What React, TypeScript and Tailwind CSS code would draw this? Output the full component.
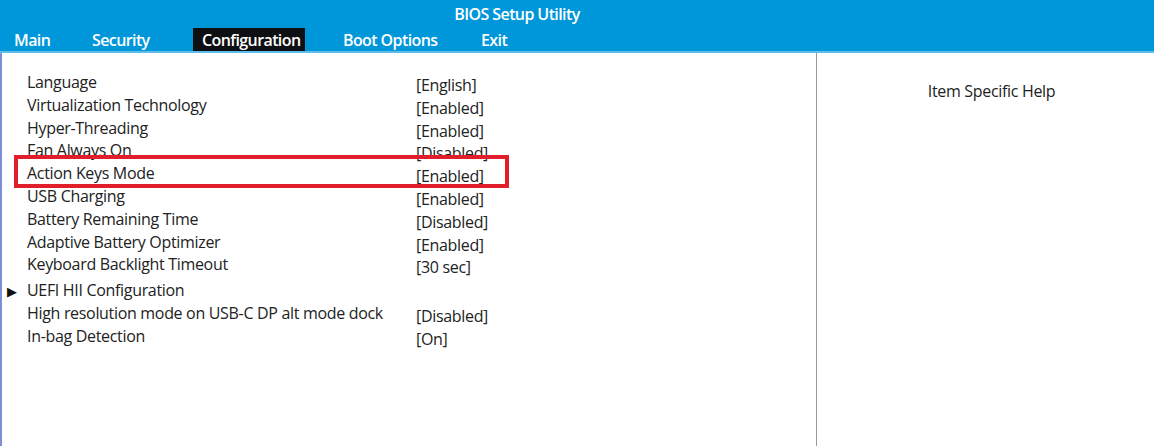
const tabs = [
  { name: "Main", cls: "w-[78px]" },
  { name: "Security", cls: "w-[101px]" },
  { name: "Configuration", cls: "w-[112px] bg-[#0e0f12] pl-[9px]" },
  { name: "Boot Options", cls: "ml-[38px] w-[138px]" },
  { name: "Exit", cls: "" },
];

type Item = { label: string; value?: string; submenu?: boolean; selected?: boolean };

const items: Item[] = [
  { label: "Language", value: "[English]" },
  { label: "Virtualization Technology", value: "[Enabled]" },
  { label: "Hyper-Threading", value: "[Enabled]" },
  { label: "Fan Always On", value: "[Disabled]" },
  { label: "Action Keys Mode", value: "[Enabled]", selected: true },
  { label: "USB Charging", value: "[Enabled]" },
  { label: "Battery Remaining Time", value: "[Disabled]" },
  { label: "Adaptive Battery Optimizer", value: "[Enabled]" },
  { label: "Keyboard Backlight Timeout", value: "[30 sec]" },
  { label: "UEFI HII Configuration", submenu: true },
  { label: "High resolution mode on USB-C DP alt mode dock", value: "[Disabled]" },
  { label: "In-bag Detection", value: "[On]" },
];

function Row({ item }: { item: Item }) {
  return (
    <div
      className={
        "relative flex h-[22.8px] items-start" + (item.submenu ? " mt-[3px]" : "")
      }
    >
      {item.submenu && (
        <span className="absolute left-[5px] top-[4px] text-[13px] leading-none text-[#111]">▶</span>
      )}
      <span className="w-[414px] shrink-0 pl-[25px] leading-[18px]">{item.label}</span>
      {item.value && <span className="mt-[3px] leading-[18px]">{item.value}</span>}
      {item.selected && (
        <div className="pointer-events-none absolute left-[12px] top-[-9px] h-[33px] w-[495px] border-[4px] border-[#e01f2b]" />
      )}
    </div>
  );
}

export default function App() {
  return (
    <div
      className="flex h-[446px] w-[1154px] flex-col overflow-hidden bg-white text-[#222]"
      style={{ fontFamily: '"Open Sans", "Liberation Sans", sans-serif' }}
    >
      <header className="bg-[#0096da] text-white">
        <div className="flex h-[28px] items-start justify-center pt-[2px] text-[16px] font-semibold tracking-[-0.6px]">
          <span className="ml-[-120px]">BIOS Setup Utility</span>
        </div>
        <nav className="flex h-[23px] items-stretch pl-[14px] text-[16px] font-semibold tracking-[-0.6px]">
          {tabs.map((t) => (
            <div key={t.name} className={"flex shrink-0 items-center " + t.cls}>
              {t.name}
            </div>
          ))}
        </nav>
        <div className="h-[2px] bg-[#5cbdea]" />
      </header>
      <main className="flex flex-1 border-l-2 border-[#7d8fd8]">
        <section className="w-[815px] shrink-0 border-r border-[#9a9a9a] pt-[20px] text-[16px] tracking-[-0.32px]">
          {items.map((it) => (
            <Row key={it.label} item={it} />
          ))}
        </section>
        <aside className="flex-1 pt-[26px] text-center text-[16px] tracking-[-0.32px]">
          <span className="ml-[12px]">Item Specific Help</span>
        </aside>
      </main>
    </div>
  );
}
